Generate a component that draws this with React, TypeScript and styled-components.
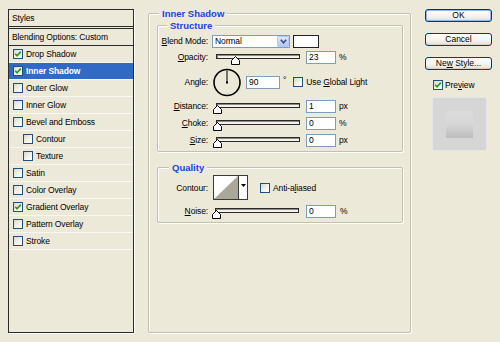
import React from 'react';
import styled, { createGlobalStyle } from 'styled-components';

const Global = createGlobalStyle`
  html, body { margin: 0; padding: 0; background: #ece9d8; }
  body {
    font-family: "Liberation Sans", Arial, sans-serif;
    font-size: 8.5px;
    letter-spacing: -0.12px;
    color: #000;
  }
  * { box-sizing: border-box; }
`;

const Window = styled.div`
  width: 500px;
  height: 342px;
  padding: 8px 8px 9px 8px;
  display: flex;
  align-items: stretch;
  background: #ece9d8;
`;

/* ---------- left styles list ---------- */
const StylesPanel = styled.div`
  width: 126px;
  flex: none;
  margin-top: 1px;
  border: 1px solid #2a2a2a;
  box-shadow: 1px 1px 0 #fff;
  display: flex;
  flex-direction: column;
`;

const PanelHeader = styled.div<{ $double?: boolean }>`
  height: ${p => (p.$double ? 19 : 17)}px;
  display: flex;
  align-items: center;
  padding-left: 3px;
  border-bottom: ${p => (p.$double ? '3px double #2a2a2a' : '1px solid #2a2a2a')};
`;

const StyleItem = styled.div<{ $indent?: boolean; $selected?: boolean }>`
  height: 17px;
  display: flex;
  align-items: center;
  gap: 3px;
  padding-left: ${p => (p.$indent ? 14 : 4)}px;
  border-bottom: 1px solid #f8f7f0;
  background: ${p => (p.$selected ? '#316ac5' : 'transparent')};
  color: ${p => (p.$selected ? '#fff' : '#000')};
  font-weight: ${p => (p.$selected ? 'bold' : 'normal')};
`;

const Box = styled.span`
  width: 10px;
  height: 10px;
  flex: none;
  border: 1px solid #1c5180;
  background: linear-gradient(135deg, #d9d7cc 0%, #f3f2ec 55%, #ffffff 100%);
  display: inline-flex;
  align-items: center;
  justify-content: center;
`;

const Check: React.FC<{ on?: boolean }> = ({ on }) => (
  <Box>
    {on && (
      <svg width="8" height="8" viewBox="0 0 8 8">
        <polyline points="1.2,3.8 3,5.8 6.8,1.6" fill="none" stroke="#21a121" strokeWidth="1.7" />
      </svg>
    )}
  </Box>
);

/* ---------- group boxes ---------- */
const Group = styled.fieldset<{ $pad: string; $mt?: number }>`
  margin: ${p => p.$mt ?? 0}px 0 0 0;
  min-width: 0;
  padding: ${p => p.$pad};
  border: 1px solid #c4c0ae;
  border-radius: 2px;
  box-shadow: inset 1px 1px 0 #fff, 1px 1px 0 #fff;
  display: flex;
  flex-direction: column;
`;

const MainGroup = styled(Group)`
  width: 263px;
  flex: none;
  margin-left: 14px;
`;

const Legend = styled.legend<{ $ml: number }>`
  font-weight: bold;
  font-size: 9.5px;
  letter-spacing: 0;
  line-height: 11px;
  color: #1846d8;
  padding: 0 3px;
  margin-left: ${p => p.$ml}px;
  background: #ece9d8;
`;

/* ---------- rows / controls ---------- */
const Row = styled.div<{ $h: number; $mt?: number }>`
  display: flex;
  align-items: center;
  height: ${p => p.$h}px;
  margin-top: ${p => p.$mt ?? 0}px;
`;

const Label = styled.span`
  width: 50px;
  flex: none;
  text-align: right;
  margin-right: 4px;
  white-space: nowrap;
`;

const Key = styled.span`
  text-decoration: underline;
`;

const Field = styled.input<{ $w: number; $ml: number }>`
  width: ${p => p.$w}px;
  height: 13px;
  flex: none;
  margin: 0 0 0 ${p => p.$ml}px;
  padding: 0 2px;
  border: 1px solid #7f9db9;
  background: #fff;
  font: inherit;
  font-size: 8.5px;
  color: #000;
  outline: none;
`;

const Unit = styled.span<{ $ml?: number; $up?: boolean }>`
  margin-left: ${p => p.$ml ?? 3}px;
  align-self: ${p => (p.$up ? 'flex-start' : 'center')};
  margin-top: ${p => (p.$up ? 8 : 0)}px;
`;

const Select = styled.div`
  width: 78px;
  height: 13px;
  flex: none;
  border: 1px solid #7f9db9;
  background: #fff;
  display: flex;
  align-items: center;
  padding-left: 2px;
`;

const SelectText = styled.span`
  flex: 1;
`;

const DropBtn = styled.span`
  width: 12px;
  height: 11px;
  border: 1px solid #b6c9f3;
  border-radius: 1px;
  background: linear-gradient(180deg, #dde7fd 0%, #c3d4fb 60%, #b1c6f6 100%);
  display: flex;
  align-items: center;
  justify-content: center;
`;

const Swatch = styled.div`
  width: 26px;
  height: 13px;
  flex: none;
  margin-left: 3px;
  border: 1px solid #222;
  background: #fff;
`;

const SliderWrap = styled.div<{ $ml: number }>`
  position: relative;
  width: 87px;
  height: 14px;
  flex: none;
  margin-left: ${p => p.$ml}px;
`;

const Track = styled.div`
  position: absolute;
  left: 3px;
  right: 0;
  top: 4px;
  height: 5px;
  border: 1px solid #2a2a2a;
  background: #f2f1ea;
  box-shadow: inset 1px 1px 0 #8d8a7c;
`;

const Thumb = styled.svg`
  position: absolute;
  top: 6px;
`;

const Slider: React.FC<{ pct: number; ml?: number }> = ({ pct, ml = 1 }) => (
  <SliderWrap $ml={ml}>
    <Track />
    <Thumb width="9" height="9" viewBox="0 0 9 9" style={{ left: Math.round(pct * 79) }}>
      <polygon points="0.5,8.5 0.5,4.5 4.5,0.5 8.5,4.5 8.5,8.5" fill="#fff" stroke="#000" strokeWidth="1" />
    </Thumb>
  </SliderWrap>
);

const DialSvg = styled.svg`
  flex: none;
  margin-left: 1px;
`;

const CheckLabel = styled.span<{ $ml: number }>`
  display: flex;
  align-items: center;
  gap: 3px;
  margin-left: ${p => p.$ml}px;
  white-space: nowrap;
`;

const ContourPicker = styled.div`
  width: 35px;
  height: 25px;
  flex: none;
  margin-left: 1px;
  border: 1px solid #3a3a3a;
  display: flex;
  background: #fff;
`;

const ContourArrow = styled.div`
  width: 9px;
  border-left: 1px solid #3a3a3a;
  display: flex;
  justify-content: center;
  padding-top: 8px;
`;

/* ---------- right column ---------- */
const Side = styled.div`
  width: 67px;
  flex: none;
  margin-left: 14px;
  padding-top: 1px;
  display: flex;
  flex-direction: column;
`;

const Button = styled.button<{ $default?: boolean; $mt?: number }>`
  height: 13px;
  margin: ${p => p.$mt ?? 0}px 0 0 0;
  padding: 0;
  border: 1px solid #003c74;
  border-radius: 3px;
  background: linear-gradient(180deg, #ffffff 0%, #f5f4ef 55%, #e2dfd4 100%);
  box-shadow: ${p => (p.$default ? 'inset 0 0 0 1px #93b4ec' : 'inset 0 -1px 0 #d6d0c5')};
  font: inherit;
  font-size: 8.5px;
  line-height: 11px;
  color: #000;
  text-align: center;
`;

const PreviewRow = styled.div`
  margin-top: 10px;
  height: 9px;
  padding-left: 8px;
  display: flex;
  align-items: center;
  gap: 2px;
`;

const PreviewBox = styled.div`
  width: 55px;
  height: 54px;
  margin: 8px 0 0 7px;
  background: #d6d6d6;
  border: 1px solid #e6e6e6;
  display: flex;
  align-items: center;
  justify-content: center;
`;

const PreviewSquare = styled.div`
  width: 27px;
  height: 27px;
  background: linear-gradient(180deg, #dbdbdb 0%, #d8d8d8 45%, #c9c9c9 75%, #bcbcbc 100%);
`;

const styleItems: { name: string; on?: boolean; indent?: boolean; selected?: boolean }[] = [
  { name: 'Drop Shadow', on: true },
  { name: 'Inner Shadow', on: true, selected: true },
  { name: 'Outer Glow' },
  { name: 'Inner Glow' },
  { name: 'Bevel and Emboss' },
  { name: 'Contour', indent: true },
  { name: 'Texture', indent: true },
  { name: 'Satin' },
  { name: 'Color Overlay' },
  { name: 'Gradient Overlay', on: true },
  { name: 'Pattern Overlay' },
  { name: 'Stroke' },
];

export default function App() {
  return (
    <>
      <Global />
      <Window>
        <StylesPanel>
          <PanelHeader $double>Styles</PanelHeader>
          <PanelHeader>Blending Options: Custom</PanelHeader>
          {styleItems.map(s => (
            <StyleItem key={s.name} $indent={s.indent} $selected={s.selected}>
              <Check on={s.on} />
              {s.name}
            </StyleItem>
          ))}
        </StylesPanel>

        <MainGroup $pad="1px 7px 0 8px">
          <Legend $ml={2}>Inner Shadow</Legend>

          <Group $pad="3px 0 4px 0">
            <Legend $ml={9}>Structure</Legend>
            <Row $h={14}>
              <Label><Key>B</Key>lend Mode:</Label>
              <Select>
                <SelectText>Normal</SelectText>
                <DropBtn>
                  <svg width="7" height="5" viewBox="0 0 7 5">
                    <polyline points="0.8,0.8 3.5,3.8 6.2,0.8" fill="none" stroke="#3d5285" strokeWidth="1.7" />
                  </svg>
                </DropBtn>
              </Select>
              <Swatch />
            </Row>
            <Row $h={14} $mt={2}>
              <Label><Key>O</Key>pacity:</Label>
              <Slider pct={0.23} />
              <Field $w={30} $ml={6} readOnly value="23" />
              <Unit>%</Unit>
            </Row>
            <Row $h={30} $mt={3}>
              <Label>Angle:</Label>
              <DialSvg width="28" height="29" viewBox="0 0 28 29">
                <circle cx="14" cy="14.5" r="13" fill="none" stroke="#000" strokeWidth="1.6" />
                <line x1="14" y1="14.5" x2="14" y2="2.5" stroke="#000" strokeWidth="1" />
                <rect x="13" y="13.5" width="2" height="2" fill="#000" />
              </DialSvg>
              <Field $w={34} $ml={5} readOnly value="90" />
              <Unit $up>°</Unit>
              <CheckLabel $ml={7}>
                <Check />
                <span>Use <Key>G</Key>lobal Light</span>
              </CheckLabel>
            </Row>
            <Row $h={14} $mt={2}>
              <Label><Key>D</Key>istance:</Label>
              <Slider pct={0.004} />
              <Field $w={30} $ml={6} readOnly value="1" />
              <Unit>px</Unit>
            </Row>
            <Row $h={14} $mt={3}>
              <Label><Key>C</Key>hoke:</Label>
              <Slider pct={0} />
              <Field $w={30} $ml={6} readOnly value="0" />
              <Unit>%</Unit>
            </Row>
            <Row $h={14} $mt={3}>
              <Label><Key>S</Key>ize:</Label>
              <Slider pct={0} />
              <Field $w={30} $ml={6} readOnly value="0" />
              <Unit>px</Unit>
            </Row>
          </Group>

          <Group $pad="2px 0 4px 0" $mt={10}>
            <Legend $ml={11}>Quality</Legend>
            <Row $h={25}>
              <Label>Contour:</Label>
              <ContourPicker>
                <svg width="24" height="23" viewBox="0 0 24 23">
                  <rect width="24" height="23" fill="#fff" />
                  <polygon points="0,23 24,0 24,23" fill="#aca899" />
                </svg>
                <ContourArrow>
                  <svg width="5" height="3" viewBox="0 0 5 3">
                    <polygon points="0,0 5,0 2.5,3" fill="#000" />
                  </svg>
                </ContourArrow>
              </ContourPicker>
              <CheckLabel $ml={12}>
                <Check />
                <span>Anti-a<Key>l</Key>iased</span>
              </CheckLabel>
            </Row>
            <Row $h={14} $mt={4}>
              <Label><Key>N</Key>oise:</Label>
              <Slider pct={0} ml={0} />
              <Field $w={30} $ml={7} readOnly value="0" />
              <Unit $ml={4}>%</Unit>
            </Row>
          </Group>
        </MainGroup>

        <Side>
          <Button $default>OK</Button>
          <Button $mt={11}>Cancel</Button>
          <Button $mt={11}>Ne<Key>w</Key> Style...</Button>
          <PreviewRow>
            <Check on />
            <span>Pre<Key>v</Key>iew</span>
          </PreviewRow>
          <PreviewBox>
            <PreviewSquare />
          </PreviewBox>
        </Side>
      </Window>
    </>
  );
}
